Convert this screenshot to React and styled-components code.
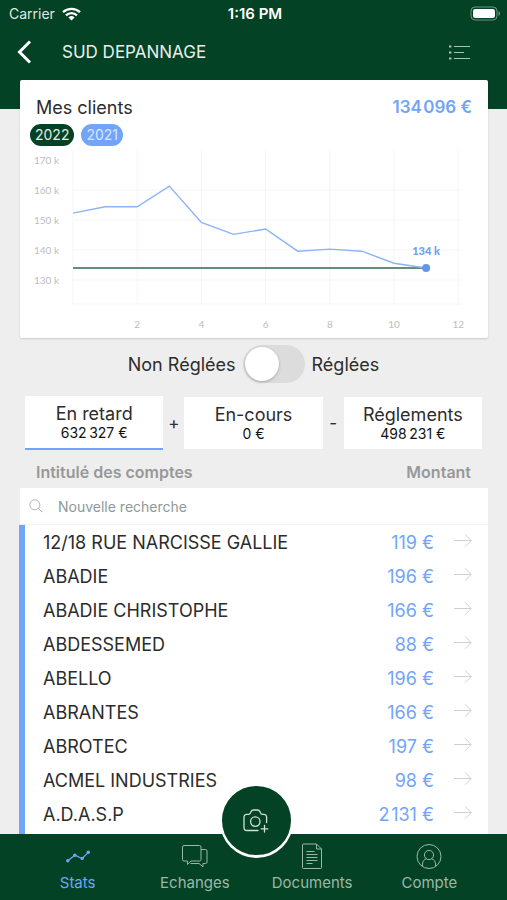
import React, { useState } from "react";
import styled, { createGlobalStyle } from "styled-components";

const green = "#044225";
const blue = "#72a4f7";

const GlobalStyle = createGlobalStyle`
  * {
    box-sizing: border-box;
  }

  body {
    margin: 0;
    background: #eeeeee;
    color: #2c2c2c;
    font-family: Inter, "Liberation Sans", sans-serif;
  }

  button,
  input {
    font: inherit;
    color: inherit;
  }

  svg {
    display: block;
  }
`;

const Page = styled.div`
  min-height: 100vh;
  display: flex;
  flex-direction: column;
`;

const Header = styled.header`
  background: ${green};
  color: #fff;
  padding-bottom: 29px;
`;

const StatusBar = styled.div`
  display: grid;
  grid-template-columns: 1fr auto 1fr;
  align-items: center;
  height: 27px;
  padding: 0 6px 0 9px;
  font-size: 14px;
`;

const Carrier = styled.div`
  display: flex;
  align-items: center;
  gap: 7px;
  color: #dfe9e3;
`;

const Clock = styled.div`
  font-size: 15px;
  font-weight: 600;
`;

const Battery = styled.div`
  justify-self: end;
`;

const TitleBar = styled.div`
  display: flex;
  align-items: center;
  height: 53px;
  padding: 0 37px 3px 17px;
`;

const IconButton = styled.button`
  display: flex;
  padding: 0;
  border: 0;
  background: none;
  cursor: pointer;
`;

const PageTitle = styled.h1`
  flex: 1;
  margin: 0;
  padding-left: 29px;
  font-size: 17px;
  font-weight: 400;
  color: #e8efeb;
`;

const Card = styled.section`
  margin: -29px 19px 0 20px;
  background: #fff;
  border-radius: 2px;
  box-shadow: 0 1px 2px rgba(0, 0, 0, 0.15);
`;

const CardHead = styled.div`
  display: flex;
  justify-content: space-between;
  align-items: center;
  height: 44px;
  padding: 10px 16px 0;
`;

const CardTitle = styled.h2`
  margin: 0;
  font-size: 18px;
  font-weight: 400;
`;

const CardTotal = styled.div`
  font-size: 17px;
  font-weight: 600;
  color: ${blue};
`;

const Years = styled.div`
  display: flex;
  gap: 7px;
  padding-left: 10px;
`;

const Year = styled.button`
  height: 22px;
  padding: 0 5px;
  border: 0;
  border-radius: 11px;
  background: ${(props) => props.$color};
  color: ${(props) => props.$text};
  font-size: 14px;
  line-height: 22px;
  cursor: pointer;
`;

const ChartSvg = styled.svg`
  width: 100%;
  font-family: Lato, sans-serif;
  font-size: 10px;
`;

const LastValue = styled.text`
  font-size: 11px;
  font-weight: 900;
  fill: #6f9ff0;
`;

const SwitchRow = styled.label`
  display: flex;
  justify-content: center;
  align-items: center;
  gap: 7px;
  padding: 7px 0 13px;
  font-size: 18px;
`;

const Switch = styled.input`
  appearance: none;
  width: 62px;
  height: 38px;
  margin: 0;
  padding: 2px;
  border-radius: 19px;
  background: #dcdcdc;
  cursor: pointer;

  &::before {
    content: "";
    display: block;
    width: 34px;
    height: 34px;
    border-radius: 50%;
    background: #fff;
    box-shadow: 0 1px 3px rgba(0, 0, 0, 0.25);
  }

  &:checked {
    background: ${blue};
  }

  &:checked::before {
    margin-left: 24px;
  }
`;

const Summary = styled.div`
  display: grid;
  grid-template-columns: 1fr 21px 1fr 21px 1fr;
  align-items: center;
  padding: 0 25px;
`;

const Operator = styled.span`
  text-align: center;
  font-size: 17px;
`;

const SummaryBox = styled.button`
  height: ${(props) => (props.$active ? 54 : 52)}px;
  padding: 2px 0 0;
  border: 0;
  border-bottom: ${(props) => (props.$active ? `2px solid ${blue}` : "0")};
  background: #fff;
  font-size: 18px;
  line-height: 20px;
  cursor: pointer;
`;

const SummaryAmount = styled.span`
  display: block;
  font-size: 14px;
  line-height: 18px;
  color: #111;
`;

const Columns = styled.div`
  display: flex;
  justify-content: space-between;
  align-items: center;
  height: 38px;
  padding: 6px 36px 0;
  font-size: 16px;
  font-weight: 600;
  color: #989898;
`;

const SearchBox = styled.label`
  display: flex;
  align-items: center;
  gap: 15px;
  height: 37px;
  margin: 0 19px 0 20px;
  padding: 0 9px;
  background: #fff;
  border-bottom: 1px solid #f1f1f1;
`;

const SearchInput = styled.input`
  flex: 1;
  min-width: 0;
  padding: 0;
  border: 0;
  outline: 0;
  background: none;
  font-size: 14px;

  &::placeholder {
    color: #8e9999;
    opacity: 1;
  }
`;

const Accounts = styled.ul`
  flex: 1;
  margin: 0 19px;
  padding: 0;
  list-style: none;
  background: #fff;
  border-left: 6px solid ${blue};
`;

const AccountLink = styled.a`
  display: flex;
  align-items: center;
  height: 34px;
  padding: 0 16px 0 18px;
  font-size: 18px;
  color: inherit;
  text-decoration: none;
`;

const AccountName = styled.span`
  flex: 1;
`;

const Amount = styled.span`
  margin-right: 20px;
  color: ${blue};
`;

const TabBar = styled.nav`
  position: sticky;
  bottom: 0;
  display: grid;
  grid-template-columns: repeat(4, 1fr);
  height: 66px;
  padding: 0 19px;
  background: ${green};
`;

const Tab = styled.a`
  display: flex;
  flex-direction: column;
  align-items: center;
  gap: 4px;
  padding-top: 9px;
  font-size: 15px;
  line-height: 20px;
  color: ${(props) => (props.$active ? blue : "#9ab8a7")};
  text-decoration: none;
`;

const CameraButton = styled.button`
  position: absolute;
  top: -50px;
  left: calc(50% - 34px);
  display: flex;
  justify-content: center;
  align-items: center;
  width: 73px;
  height: 73px;
  padding: 0;
  border: 2px solid #fff;
  border-radius: 50%;
  box-shadow: 0 1px 0 #fff;
  background: ${green};
  color: #cfe0d6;
  cursor: pointer;
`;

const history = [152.3, 154.4, 154.4, 161.3, 149.2, 145.2, 147, 139.6, 140.3, 139.6, 135.6, 134];

const accounts = [
  ["12/18 RUE NARCISSE GALLIE", "119 €"],
  ["ABADIE", "196 €"],
  ["ABADIE CHRISTOPHE", "166 €"],
  ["ABDESSEMED", "88 €"],
  ["ABELLO", "196 €"],
  ["ABRANTES", "166 €"],
  ["ABROTEC", "197 €"],
  ["ACMEL INDUSTRIES", "98 €"],
  ["A.D.A.S.P", "2\u200a131 €"],
];

const chartX = (month) => 53 + month * 32.1;
const chartY = (value) => 14 + (170 - value) * 3;

const Chart = () => {
  const line = history.map((value, i) => `${chartX(i)},${chartY(value)}`).join(" ");
  return (
    <ChartSvg viewBox="0 0 468 192" role="img" aria-label="Mes clients">
      <g stroke="#f5f5f5">
        {[160, 150, 140, 130, 122].map((v) => (
          <line key={v} x1={53} x2={442} y1={chartY(v)} y2={chartY(v)} />
        ))}
        {[0, 2, 4, 6, 8, 10, 12].map((m) => (
          <line key={m} x1={chartX(m)} x2={chartX(m)} y1={4} y2={chartY(122)} />
        ))}
      </g>
      <g fill="#bdbdbd">
        {[170, 160, 150, 140, 130].map((v) => (
          <text key={v} x={39} y={chartY(v) + 4} textAnchor="end">
            {v} k
          </text>
        ))}
        {[2, 4, 6, 8, 10, 12].map((m) => (
          <text key={m} x={chartX(m)} y={182} textAnchor="middle">
            {m}
          </text>
        ))}
      </g>
      <line
        x1={chartX(0)}
        x2={chartX(11)}
        y1={chartY(134)}
        y2={chartY(134)}
        stroke="#688c7b"
        strokeWidth="2"
      />
      <polyline points={line} fill="none" stroke="#8bb3f7" strokeWidth="1.4" />
      <circle cx={chartX(11)} cy={chartY(134)} r="4" fill="#6496e8" />
      <LastValue x={chartX(11)} y={chartY(134) - 13} textAnchor="middle">
        134 k
      </LastValue>
    </ChartSvg>
  );
};

const WifiIcon = () => (
  <svg width="19" height="14" viewBox="0 0 19 14" fill="none" stroke="#fff" strokeWidth="2.3">
    <path d="M1 5.2a12.3 12.3 0 0 1 17 0M4 8.3a8 8 0 0 1 11 0" />
    <path d="M9.5 13.6 6.4 10.4a4.5 4.5 0 0 1 6.2 0z" fill="#fff" stroke="none" />
  </svg>
);

const BatteryIcon = () => (
  <svg width="31" height="15" viewBox="0 0 31 15">
    <rect x="1" y="1" width="26" height="13" rx="4" fill="none" stroke="#6f9480" />
    <rect x="3" y="3" width="22" height="9" rx="2.2" fill="#fff" />
    <path d="M28.5 5.2c2 .7 2 3.9 0 4.6z" fill="#6f9480" />
  </svg>
);

const BackIcon = () => (
  <svg width="16" height="24" viewBox="0 0 16 24" fill="none" stroke="#fff" strokeWidth="3">
    <path d="M13 1.500 2.500 12 13 22.500" />
  </svg>
);

const ListIcon = () => (
  <svg width="21" height="15" viewBox="0 0 21 15" fill="none" stroke="#a9c2b4">
    <path d="M5 1.5h16M5 7.5h10M5 13.5h16" />
    <path d="M0 1.5h2.4M0 7.5h2.4M0 13.5h2.4" strokeWidth="2" />
  </svg>
);

const SearchIcon = () => (
  <svg width="14" height="14" viewBox="0 0 14 14" fill="none" stroke="#b4b4b4">
    <circle cx="5.8" cy="5.8" r="5" />
    <path d="m9.4 9.4 3.8 3.8" />
  </svg>
);

const ArrowIcon = () => (
  <svg width="18" height="18" viewBox="0 0 18 18" fill="none" stroke="#cfcfcf">
    <path d="M0 7.500h17M11 1.300l6.200 6.200-6.200 6.200" />
  </svg>
);

const StatsIcon = () => (
  <svg width="26" height="26" viewBox="0 0 26 26" fill="none" stroke="currentColor">
    <path d="m2.5 18 7.3-5.7 7.4 3.2 6.3-6.4" strokeWidth="1.2" />
    <g fill="currentColor" stroke="none">
      <circle cx="2.8" cy="17.8" r="1.7" />
      <circle cx="9.8" cy="12.2" r="1.7" />
      <circle cx="17.2" cy="15.4" r="1.7" />
      <circle cx="23.3" cy="9.2" r="1.7" />
    </g>
  </svg>
);

const ChatIcon = () => (
  <svg width="26" height="26" viewBox="0 0 26 26" fill="none" stroke="currentColor">
    <path d="M2 2.5h15.5A1.500 1.500 0 0 1 19 4v12.500a1.500 1.500 0 0 1-1.500 1.500H9l-3.500 3.500V18H2a1.500 1.500 0 0 1-1.500-1.500V4A1.500 1.500 0 0 1 2 2.500z" />
    <path d="M19 6.500h4.500A1.500 1.500 0 0 1 25 8v11a1.500 1.500 0 0 1-1.500 1.500H21v3.300l-4-3.300H8.500" />
  </svg>
);

const DocumentIcon = () => (
  <svg width="26" height="26" viewBox="0 0 26 26" fill="none" stroke="currentColor">
    <path d="M4 1h13.500l5 5v18.500a1 1 0 0 1-1 1H4.500a1 1 0 0 1-1-1V1.500z" />
    <path d="M17.500 1v5h5M7.500 8.500h8M7.500 11.500h11M7.500 14.500h11M7.500 17.500h11M7.500 20.500h6" />
  </svg>
);

const AccountIcon = () => (
  <svg width="26" height="26" viewBox="0 0 26 26" fill="none" stroke="currentColor">
    <circle cx="13" cy="13.500" r="12" />
    <circle cx="13" cy="12" r="4.600" />
    <path d="M6.500 23.200V21c0-2.800 1.700-4.600 3.900-5.300M19.500 23.200V21c0-2.800-1.700-4.600-3.900-5.300" />
  </svg>
);

const CameraIcon = () => (
  <svg
    width="26"
    height="24"
    viewBox="0 0 26 24"
    fill="none"
    stroke="currentColor"
    strokeWidth="1.3"
    strokeLinecap="round"
  >
    <path d="M15 21.500H3.600A2.600 2.600 0 0 1 1 18.900V8a2.600 2.600 0 0 1 2.600-2.600h2.200c1.200 0 1.300-.9 1.900-2.100C8.300 1.900 8.900 1 10.300 1h4.400c1.400 0 2 .9 2.600 2.300.6 1.200.7 2.100 1.900 2.100h1.800A2.600 2.600 0 0 1 23.600 8v5.500" />
    <circle cx="12.300" cy="12.600" r="4.700" />
    <path d="M21.500 16.500v6.500M18.200 19.800h6.600" />
  </svg>
);

const App = () => {
  const [paid, setPaid] = useState(false);
  const [search, setSearch] = useState("");

  const shown = accounts.filter(([name]) => name.toLowerCase().includes(search.toLowerCase()));

  return (
    <Page>
      <GlobalStyle />
      <Header>
        <StatusBar>
          <Carrier>
            Carrier <WifiIcon />
          </Carrier>
          <Clock>1:16 PM</Clock>
          <Battery>
            <BatteryIcon />
          </Battery>
        </StatusBar>
        <TitleBar>
          <IconButton aria-label="Retour">
            <BackIcon />
          </IconButton>
          <PageTitle>SUD DEPANNAGE</PageTitle>
          <IconButton aria-label="Menu">
            <ListIcon />
          </IconButton>
        </TitleBar>
      </Header>

      <Card>
        <CardHead>
          <CardTitle>Mes clients</CardTitle>
          <CardTotal>134{"\u200a"}096 €</CardTotal>
        </CardHead>
        <Years>
          <Year $color={green} $text="#e3ece7">
            2022
          </Year>
          <Year $color={blue} $text="#d8e6ff">
            2021
          </Year>
        </Years>
        <Chart />
      </Card>

      <SwitchRow>
        Non Réglées
        <Switch
          type="checkbox"
          role="switch"
          checked={paid}
          onChange={(e) => setPaid(e.target.checked)}
        />
        Réglées
      </SwitchRow>

      <Summary>
        <SummaryBox $active>
          En retard
          <SummaryAmount>632{"\u2009"}327 €</SummaryAmount>
        </SummaryBox>
        <Operator>+</Operator>
        <SummaryBox>
          En-cours
          <SummaryAmount>0 €</SummaryAmount>
        </SummaryBox>
        <Operator>-</Operator>
        <SummaryBox>
          Réglements
          <SummaryAmount>498{"\u2009"}231 €</SummaryAmount>
        </SummaryBox>
      </Summary>

      <Columns>
        <span>Intitulé des comptes</span>
        <span>Montant</span>
      </Columns>

      <SearchBox>
        <SearchIcon />
        <SearchInput
          type="text"
          aria-label="Nouvelle recherche"
          placeholder="Nouvelle recherche"
          value={search}
          onChange={(e) => setSearch(e.target.value)}
        />
      </SearchBox>
      <Accounts>
        {shown.map(([name, amount]) => (
          <li key={name}>
            <AccountLink href="#">
              <AccountName>{name}</AccountName>
              <Amount>{amount}</Amount>
              <ArrowIcon />
            </AccountLink>
          </li>
        ))}
      </Accounts>

      <TabBar>
        <Tab href="#" $active>
          <StatsIcon />
          Stats
        </Tab>
        <Tab href="#">
          <ChatIcon />
          Echanges
        </Tab>
        <Tab href="#">
          <DocumentIcon />
          Documents
        </Tab>
        <Tab href="#">
          <AccountIcon />
          Compte
        </Tab>
        <CameraButton aria-label="Photo">
          <CameraIcon />
        </CameraButton>
      </TabBar>
    </Page>
  );
};

export default App;
